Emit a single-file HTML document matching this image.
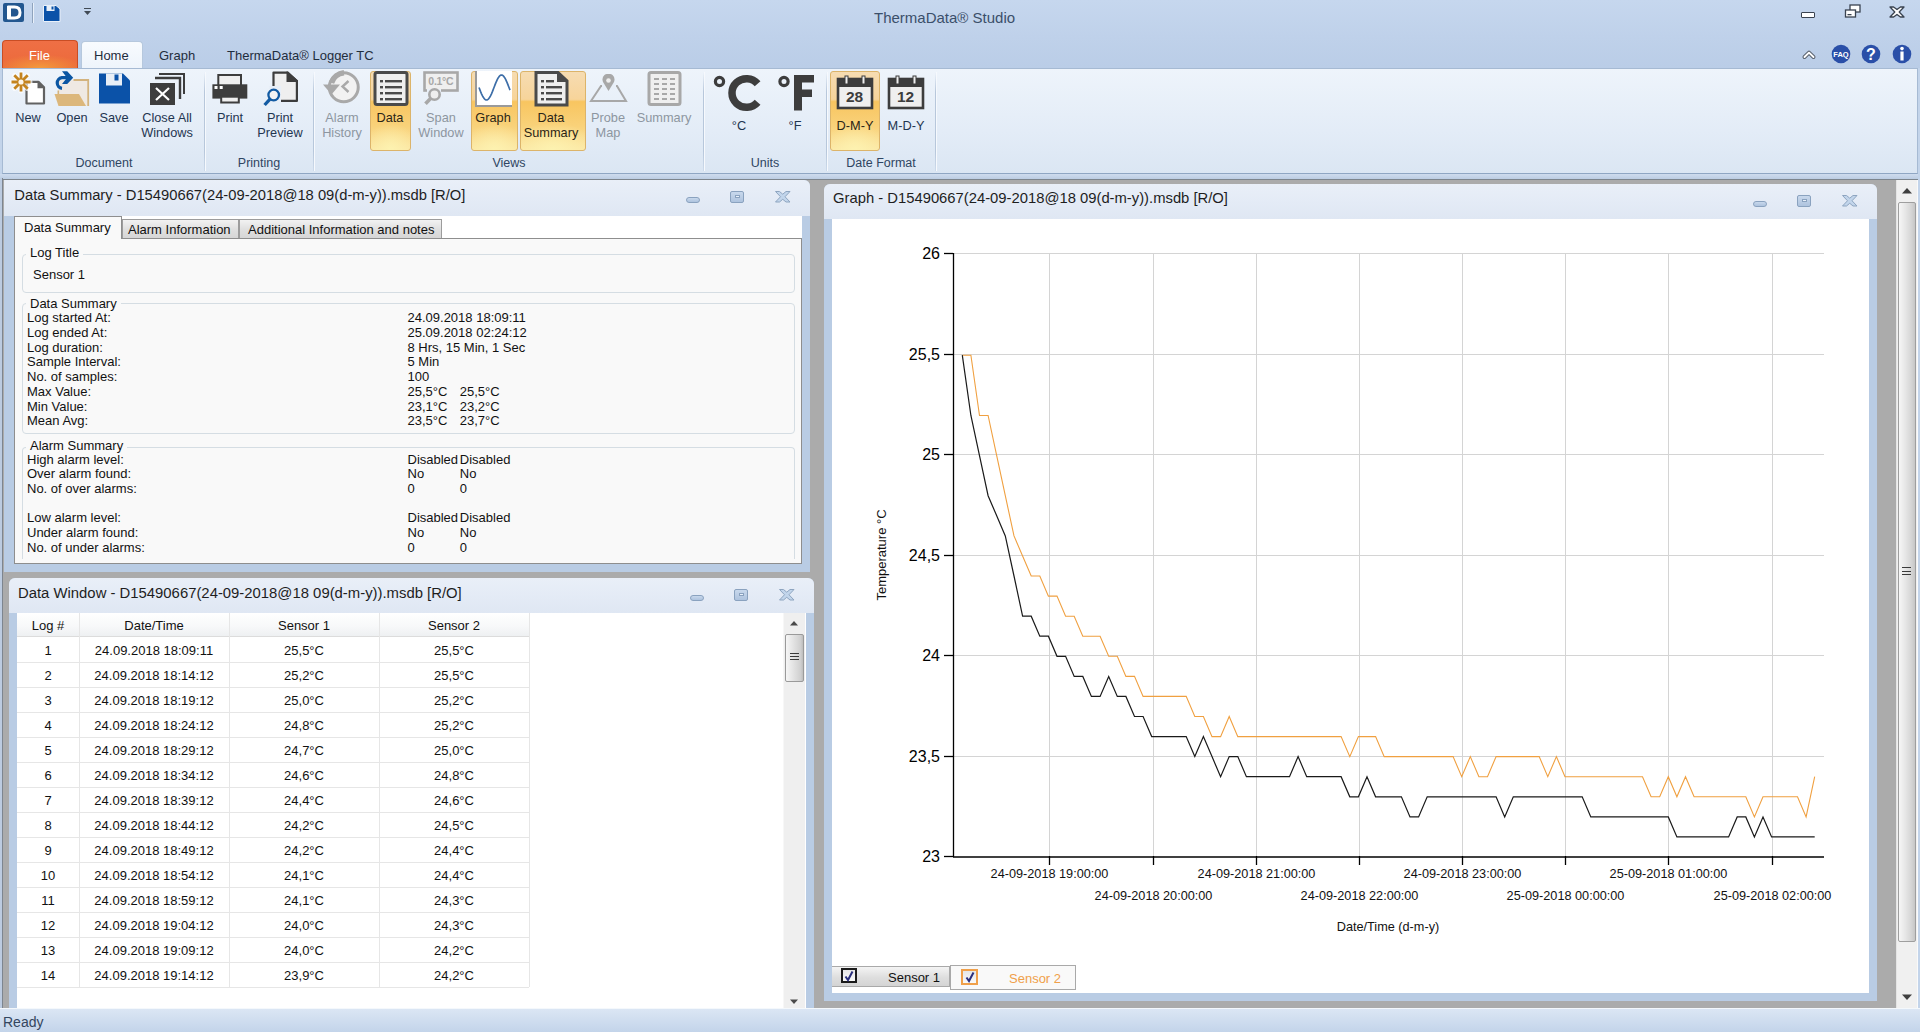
<!DOCTYPE html>
<html><head><meta charset="utf-8"><title>ThermaData Studio</title>
<style>
*{margin:0;padding:0;box-sizing:border-box}
html,body{width:1920px;height:1032px;overflow:hidden}
body{font-family:"Liberation Sans",sans-serif;color:#000;background:#c3d4ea}
#app{position:relative;width:1920px;height:1032px;overflow:hidden}
.a{position:absolute}
.t{position:absolute;white-space:nowrap;line-height:1}
/* title bar */
#titlebar{position:absolute;left:0;top:0;width:1920px;height:68px;
 background:linear-gradient(#c6d7ee 0%,#bfd1ea 55%,#bacde7 100%)}
/* ribbon */
#ribbon{position:absolute;left:2px;top:68px;width:1916px;height:106px;
 background:linear-gradient(#eef4fb 0%,#e3ecf7 60%,#dbe6f3 100%);
 border:1px solid #a6bad3;border-bottom-color:#8fa6c3}
#ribstrip{position:absolute;left:0;top:174px;width:1920px;height:5px;background:linear-gradient(#cfdcee,#bccde3)}
#mdi{position:absolute;left:0;top:178.5px;width:1920px;height:829.5px;background:#ababab;border-top:1.5px solid #7d858d}
#mdil{position:absolute;left:0;top:178px;width:2.5px;height:830px;background:#bccbe0;border-right:1.5px solid #7d858f}
#status{position:absolute;left:0;top:1008px;width:1920px;height:24px;
 background:linear-gradient(#dbe6f4,#c3d4ea);border-top:1px solid #f4f8fc}
/* mdi windows */
.win{position:absolute;background:#b9cce4;border-radius:6px 6px 0 0}
.win .cap{position:absolute;left:0;top:0;right:0;border-radius:6px 6px 0 0;
 background:linear-gradient(#e9eff8 0%,#e4ebf6 50%,#dfe7f3 100%)}
.win .cap .ttl{position:absolute;font-size:14.75px;color:#1e1e1e;white-space:nowrap;line-height:1}
.wbtn{position:absolute}
.hl{position:absolute;border:1px solid #dcb46a;border-radius:3px;
 background:radial-gradient(ellipse 70% 35% at 50% 100%,#fdf2b0 0%,rgba(253,238,170,0) 100%),
 linear-gradient(#f6dcb2 0%,#f7d49a 35%,#f8c560 38%,#f9d27a 70%,#fbe7a6 100%)}
.rl{position:absolute;font-size:12.75px;line-height:15px;color:#1f3550;text-align:center;white-space:nowrap;transform:translateX(-50%)}
.rl.dis{color:#8d96a0}
.gl{position:absolute;top:155.7px;font-size:12.5px;line-height:14px;color:#2f4562;white-space:nowrap;transform:translateX(-50%)}
.gb{position:absolute;border:1px solid #d5dde3;border-radius:4px}
.gbl{position:absolute;font-size:13px;line-height:1;color:#111;background:#f9f9f9;padding:0 4px;white-space:nowrap}
.sm{font-size:13px;color:#111}
.tc{font-size:13px;color:#111;transform:translateX(-50%)}
.yl{font-family:"Liberation Sans",sans-serif;font-size:16px;text-anchor:end;fill:#000}
.xl{font-family:"Liberation Sans",sans-serif;font-size:12.7px;text-anchor:middle;fill:#111}
.rl.hlt{color:#2b2516}

</style></head>
<body>
<div id="app">
<div id="titlebar">
 <!-- app logo -->
 <svg class="a" style="left:3px;top:3px" width="22" height="20" viewBox="0 0 22 20">
  <rect x="0" y="0" width="21" height="19" rx="2" fill="#23578f"/>
  <path d="M6 4 H11.5 Q17 4 17 9.5 Q17 15 11.5 15 H6 Z" fill="none" stroke="#fff" stroke-width="3"/>
  <rect x="4" y="3" width="4" height="13" fill="#fff"/>
 </svg>
 <div class="a" style="left:32px;top:3px;width:1px;height:20px;background:#8fa3bd;box-shadow:1px 0 0 #e8f0fa"></div>
 <!-- save -->
 <svg class="a" style="left:43px;top:5px" width="18" height="17" viewBox="0 0 18 17">
  <path d="M0.5 0.5 H13 L17 4 V16.5 H0.5 Z" fill="#0b52a8" stroke="#e9f0f9" stroke-width="1"/>
  <rect x="3.5" y="1" width="8" height="5" fill="#e9f0f9"/>
  <rect x="8.5" y="1.5" width="2" height="3" fill="#0b52a8"/>
 </svg>
 <!-- qat dropdown -->
 <svg class="a" style="left:83px;top:8px" width="9" height="8" viewBox="0 0 9 8">
  <rect x="1" y="0" width="7" height="1" fill="#404a55"/>
  <path d="M1 3 H8 L4.5 7 Z" fill="#404a55"/>
 </svg>
 <div class="t" style="left:874px;top:10px;font-size:15px;color:#3b4f6a;letter-spacing:0px">ThermaData® Studio</div>
 <!-- window controls -->
 <div class="a" style="left:1801px;top:12px;width:14px;height:6px;border:1.5px solid #3a4350;border-radius:1px;background:#fff"></div>
 <svg class="a" style="left:1844px;top:4px" width="18" height="15" viewBox="0 0 18 15">
  <rect x="6" y="1" width="10" height="7" fill="#fff" stroke="#3a4350" stroke-width="1.3"/>
  <rect x="1.5" y="6" width="10" height="7" fill="#fff" stroke="#3a4350" stroke-width="1.3"/>
  <rect x="3.5" y="10" width="4" height="1.3" fill="#3a4350"/>
 </svg>
 <svg class="a" style="left:1889px;top:6px" width="16" height="12" viewBox="0 0 16 12"><path d="M1 1 H4.6 L8 3.6 L11.4 1 H15 L10.2 6 L15 11 H11.4 L8 8.4 L4.6 11 H1 L5.8 6 Z" fill="#fff" stroke="#3a4350" stroke-width="1.3" stroke-linejoin="round"/></svg>
 <!-- tabs -->
 <div class="a" style="left:2px;top:40px;width:76px;height:28px;border-radius:4px 4px 0 0;border:1px solid #c94d24;border-bottom:none;
   background:radial-gradient(ellipse 60% 50% at 50% 100%,#f39a3c 0%,rgba(243,140,60,0) 100%),linear-gradient(#ef6f45,#ec6a3a)"></div>
 <div class="t" style="left:29px;top:48.5px;font-size:13px;color:#fff">File</div>
 <div class="a" style="left:81px;top:40.5px;width:61.5px;height:28.5px;border-radius:4px 4px 0 0;border:1px solid #b6c8dd;border-bottom:none;background:linear-gradient(#f8fbfe,#eef4fb)"></div>
 <div class="t" style="left:94px;top:48.5px;font-size:13px;color:#1f2d3d">Home</div>
 <div class="t" style="left:159px;top:48.5px;font-size:13px;color:#1f2d3d">Graph</div>
 <div class="t" style="left:227px;top:48.5px;font-size:13px;color:#1f2d3d">ThermaData® Logger TC</div>
 <!-- right icons -->
 <svg class="a" style="left:1801px;top:48px" width="16" height="12" viewBox="0 0 16 12"><path d="M3.5 9 L8 4.6 L12.5 9" fill="none" stroke="#5c6470" stroke-width="4" stroke-linejoin="round" stroke-linecap="round"/><path d="M3.5 9 L8 4.6 L12.5 9" fill="none" stroke="#fff" stroke-width="1.8" stroke-linejoin="round" stroke-linecap="round"/></svg>
 <svg class="a" style="left:1831px;top:44px" width="20" height="20" viewBox="0 0 20 20">
  <circle cx="10" cy="10" r="9.3" fill="#2a4fa8"/>
  <text x="10" y="12.8" font-family="Liberation Sans" font-size="7.5" font-weight="bold" fill="#fff" text-anchor="middle">FAQ</text>
 </svg>
 <svg class="a" style="left:1861px;top:44px" width="20" height="20" viewBox="0 0 20 20">
  <circle cx="10" cy="10" r="9.3" fill="#2a4fa8"/>
  <text x="10" y="16" font-family="Liberation Sans" font-size="16" font-weight="bold" fill="#fff" text-anchor="middle">?</text>
 </svg>
 <svg class="a" style="left:1892px;top:44px" width="20" height="20" viewBox="0 0 20 20">
  <circle cx="10" cy="10" r="9.3" fill="#2a4fa8"/>
  <rect x="8.4" y="7.5" width="3.2" height="9" fill="#fff"/>
  <circle cx="10" cy="4.6" r="1.8" fill="#fff"/>
 </svg>
</div>
<div id="ribstrip"></div>

<div id="ribbon">
 <!-- group separators -->
 <div class="a" style="left:201px;top:3px;width:1px;height:99px;background:linear-gradient(rgba(170,190,215,0),#b7c7db 20%,#b7c7db 80%,rgba(170,190,215,0.3));box-shadow:1px 0 0 #f6f9fd"></div>
 <div class="a" style="left:310px;top:3px;width:1px;height:99px;background:linear-gradient(rgba(170,190,215,0),#b7c7db 20%,#b7c7db 80%,rgba(170,190,215,0.3));box-shadow:1px 0 0 #f6f9fd"></div>
 <div class="a" style="left:700px;top:3px;width:1px;height:99px;background:linear-gradient(rgba(170,190,215,0),#b7c7db 20%,#b7c7db 80%,rgba(170,190,215,0.3));box-shadow:1px 0 0 #f6f9fd"></div>
 <div class="a" style="left:823px;top:3px;width:1px;height:99px;background:linear-gradient(rgba(170,190,215,0),#b7c7db 20%,#b7c7db 80%,rgba(170,190,215,0.3));box-shadow:1px 0 0 #f6f9fd"></div>
 <div class="a" style="left:932px;top:3px;width:1px;height:99px;background:linear-gradient(rgba(170,190,215,0),#b7c7db 20%,#b7c7db 80%,rgba(170,190,215,0.3));box-shadow:1px 0 0 #f6f9fd"></div>
 <!-- highlighted buttons -->
 <div class="hl" style="left:367px;top:2px;width:41px;height:80px"></div>
 <div class="hl" style="left:468px;top:2px;width:47px;height:80px"></div>
 <div class="hl" style="left:517px;top:2px;width:66px;height:80px"></div>
 <div class="hl" style="left:827px;top:2px;width:50px;height:80px"></div>
</div>
<div id="ribicons">
 <!-- New -->
 <svg class="a" style="left:9px;top:71px" width="40" height="36" viewBox="0 0 40 36">
  <path d="M17.5 10.8 H29.5 L35 16.3 V32.5 H17.5 Z" fill="#fff" stroke="#626262" stroke-width="2.2" stroke-linejoin="round"/>
  <path d="M28.5 9.8 V17.3 H36 Z" fill="#626262"/>
  <g stroke="#fff" stroke-width="5" stroke-linecap="round" opacity="0.7">
   <path d="M12 2 V20 M3 11 H21 M5.6 4.6 L18.4 17.4 M18.4 4.6 L5.6 17.4"/>
  </g>
  <g stroke="#c4841f" stroke-width="2.8" stroke-linecap="butt">
   <path d="M12 1.5 V20.5 M2.5 11 H21.5 M5.3 4.3 L18.7 17.7 M18.7 4.3 L5.3 17.7"/>
  </g>
  <circle cx="12" cy="11" r="2.6" fill="#fdf6ea"/>
 </svg>
 <!-- Open -->
 <svg class="a" style="left:52px;top:70px" width="40" height="38" viewBox="0 0 40 38">
  <rect x="6" y="10" width="31" height="26" fill="#efe9e3"/>
  <path d="M21.5 10 H36.2 V36" fill="none" stroke="#d3b37e" stroke-width="1.8"/>
  <rect x="5.5" y="20.5" width="1.6" height="4" fill="#d3b37e"/>
  <path d="M2.5 24 H27 L34 36 H6.5 Z" fill="#dcb77b"/>
  <path d="M10 18.3 A5.4 5.4 0 0 1 9.8 7.6 H16" fill="none" stroke="#0b56a3" stroke-width="3.2"/>
  <path d="M10 1.3 H15.2 L21.2 7.7 L15.2 13.9 H10 L15 7.7 Z" fill="#0b56a3"/>
 </svg>
 <!-- Save -->
 <svg class="a" style="left:99px;top:73px" width="32" height="32" viewBox="0 0 32 32">
  <path d="M0 0.5 H24 L31 7.5 V30.5 H0 Z" fill="#0b52a8"/>
  <rect x="7" y="0.5" width="16" height="12" fill="#e8eef6"/>
  <rect x="15.5" y="1.5" width="4" height="6" fill="#0b52a8"/>
 </svg>
 <!-- Close all windows -->
 <svg class="a" style="left:149px;top:72px" width="36" height="35" viewBox="0 0 36 35">
  <path d="M10 2 H35 V22" fill="none" stroke="#3d3d3d" stroke-width="2"/>
  <path d="M6 6 H31 V27" fill="none" stroke="#3d3d3d" stroke-width="2.4"/>
  <rect x="1" y="11" width="25" height="22" fill="#3d3d3d"/>
  <path d="M7 16 L20 28 M20 16 L7 28" stroke="#fff" stroke-width="2.2"/>
 </svg>
 <!-- Print -->
 <svg class="a" style="left:211px;top:73px" width="38" height="33" viewBox="0 0 38 33">
  <rect x="7.3" y="2" width="22.7" height="11" fill="#efefef" stroke="#3d3d3d" stroke-width="2"/>
  <rect x="1.4" y="11.3" width="34.9" height="14.3" fill="#3d3d3d"/>
  <rect x="3.5" y="13" width="3" height="3" fill="#fff"/><rect x="8.7" y="13" width="3" height="3" fill="#fff"/>
  <rect x="10.2" y="23.7" width="17.6" height="5.8" fill="#efefef" stroke="#3d3d3d" stroke-width="2"/>
 </svg>
 <!-- Print preview -->
 <svg class="a" style="left:261px;top:70px" width="40" height="38" viewBox="0 0 40 38">
  <path d="M12.5 2.6 H26.5 L35.9 11 V30.9 H12.5 Z" fill="#efefef" stroke="#3d3d3d" stroke-width="2.2" stroke-linejoin="round"/>
  <path d="M25.5 1.5 H27 L37 10.5 V12 H25.5 Z" fill="#3d3d3d"/>
  <rect x="8" y="16" width="12" height="18" fill="#e8eff8"/>
  <circle cx="12.7" cy="25" r="5.3" fill="#f4f4f4" stroke="#135ba3" stroke-width="2.3"/>
  <path d="M9.2 28.8 L3.6 35" stroke="#135ba3" stroke-width="3.3"/>
 </svg>
 <!-- Alarm history -->
 <svg class="a" style="left:322px;top:70px" width="40" height="38" viewBox="0 0 40 38">
  <circle cx="21.75" cy="17.25" r="14.5" fill="#f2f2f2" stroke="#a9a9a9" stroke-width="3"/>
  <path d="M22 2.8 A14.5 14.5 0 0 0 9.5 13" fill="none" stroke="#a9a9a9" stroke-width="5.5"/>
  <path d="M1 14.5 L18 14.5 L9.5 24.5 Z" fill="#a9a9a9"/>
  <path d="M26.5 11 L20.5 16.5 L26.5 22" fill="none" stroke="#a9a9a9" stroke-width="2.4"/>
 </svg>
 <!-- Data -->
 <svg class="a" style="left:373px;top:71px" width="36" height="36" viewBox="0 0 36 36">
  <rect x="2" y="1.5" width="32" height="32" rx="2" fill="#efefef" stroke="#4a4a4a" stroke-width="3"/>
  <g fill="#4a4a4a"><rect x="7" y="9" width="3" height="2.4"/><rect x="12" y="9" width="17" height="2.4"/>
  <rect x="7" y="15" width="3" height="2.4"/><rect x="12" y="15" width="17" height="2.4"/>
  <rect x="7" y="21" width="3" height="2.4"/><rect x="12" y="21" width="17" height="2.4"/>
  <rect x="7" y="27" width="3" height="2.4"/><rect x="12" y="27" width="17" height="2.4"/></g>
 </svg>
 <!-- Span window -->
 <svg class="a" style="left:422px;top:70px" width="38" height="38" viewBox="0 0 38 38">
  <rect x="2.5" y="2.5" width="33" height="18" fill="#efefef" stroke="#a8a8a8" stroke-width="2.6"/>
  <text x="18.8" y="15" font-family="Liberation Sans" font-size="10.5" font-weight="bold" fill="#a8a8a8" text-anchor="middle" letter-spacing="-0.3">0.1°C</text>
  <rect x="5" y="19" width="14" height="5" fill="#e9f0f9"/>
  <circle cx="12.5" cy="24.5" r="5.2" fill="#efefef" stroke="#a8a8a8" stroke-width="2.6"/>
  <path d="M8.8 28.3 L3.5 33.8" stroke="#a8a8a8" stroke-width="3.6"/>
 </svg>
 <!-- Graph -->
 <svg class="a" style="left:474px;top:71px" width="40" height="37" viewBox="0 0 40 37">
  <rect x="1" y="0" width="37" height="36" fill="#fff"/>
  <path d="M2 0 V35 H38" fill="none" stroke="#9a9a9a" stroke-width="2"/>
  <path d="M5.0 16.5 L5.5 17.8 L6.0 19.1 L6.5 20.4 L7.0 21.6 L7.5 22.8 L8.0 23.8 L8.5 24.9 L9.0 25.8 L9.5 26.6 L10.0 27.3 L10.5 27.9 L11.0 28.4 L11.5 28.7 L12.0 28.9 L12.5 29.0 L13.0 28.9 L13.5 28.7 L14.0 28.4 L14.5 27.9 L15.0 27.3 L15.5 26.6 L16.0 25.8 L16.5 24.9 L17.0 23.8 L17.5 22.8 L18.0 21.6 L18.5 20.4 L19.0 19.1 L19.5 17.8 L20.0 16.5 L20.5 15.2 L21.0 13.9 L21.5 12.6 L22.0 11.4 L22.5 10.3 L23.0 9.2 L23.5 8.1 L24.0 7.2 L24.5 6.4 L25.0 5.7 L25.5 5.1 L26.0 4.6 L26.5 4.3 L27.0 4.1 L27.5 4.0 L28.0 4.1 L28.5 4.3 L29.0 4.6 L29.5 5.1 L30.0 5.7 L30.5 6.4 L31.0 7.2 L31.5 8.1 L32.0 9.2 L32.5 10.3 L33.0 11.4 L33.5 12.6 L34.0 13.9 L34.5 15.2 L35.0 16.5 L35.5 17.8 L36.0 19.1" fill="none" stroke="#3d6ea8" stroke-width="1.7"/>
 </svg>
 <!-- Data summary -->
 <svg class="a" style="left:534px;top:71px" width="36" height="36" viewBox="0 0 36 36">
  <path d="M2 1.5 H24 L33 10 V34 H2 Z" fill="#efefef" stroke="#4a4a4a" stroke-width="3"/>
  <path d="M23 1.5 V11 H33 Z" fill="#4a4a4a"/>
  <g fill="#4a4a4a"><rect x="7" y="9" width="3" height="2.4"/><rect x="12" y="9" width="8" height="2.4"/>
  <rect x="7" y="15" width="3" height="2.4"/><rect x="12" y="15" width="16" height="2.4"/>
  <rect x="7" y="21" width="3" height="2.4"/><rect x="12" y="21" width="16" height="2.4"/>
  <rect x="7" y="27" width="3" height="2.4"/><rect x="12" y="27" width="16" height="2.4"/></g>
 </svg>
 <!-- Probe map -->
 <svg class="a" style="left:589px;top:74px" width="40" height="30" viewBox="0 0 40 30">
  <path d="M2 27 L12 12 H28 L37 27 Z" fill="none" stroke="#a8a8a8" stroke-width="2"/>
  <rect x="13" y="9" width="14" height="6" fill="#e9f0f9"/>
  <path d="M19.5 17 L14 8 A6 6 0 1 1 25 8 Z" fill="#a8a8a8"/>
  <circle cx="19.5" cy="6.5" r="2.3" fill="#efefef"/>
 </svg>
 <!-- Summary -->
 <svg class="a" style="left:647px;top:71px" width="36" height="36" viewBox="0 0 36 36">
  <rect x="2" y="1.5" width="31" height="32" rx="2" fill="#efefef" stroke="#a8a8a8" stroke-width="3"/>
  <g fill="#a8a8a8">
   <rect x="7" y="7" width="5" height="2"/><rect x="15" y="7" width="5" height="2"/><rect x="23" y="7" width="5" height="2"/>
   <rect x="7" y="12" width="5" height="2"/><rect x="15" y="12" width="5" height="2"/><rect x="23" y="12" width="5" height="2"/>
   <rect x="7" y="17" width="5" height="2"/><rect x="15" y="17" width="5" height="2"/><rect x="23" y="17" width="5" height="2"/>
   <rect x="7" y="22" width="5" height="2"/><rect x="15" y="22" width="5" height="2"/><rect x="23" y="22" width="5" height="2"/>
   <rect x="7" y="27" width="5" height="2"/><rect x="15" y="27" width="5" height="2"/><rect x="23" y="27" width="5" height="2"/>
  </g>
 </svg>
 <!-- deg C -->
 <svg class="a" style="left:712px;top:73px" width="52" height="40" viewBox="0 0 52 40">
  <circle cx="7.5" cy="8.5" r="4.1" fill="none" stroke="#3d3d3d" stroke-width="3.2"/>
  <path d="M45.6 10.8 A14.5 14.3 0 1 0 45.6 29.2" fill="none" stroke="#3d3d3d" stroke-width="7.5"/>
 </svg>
 <!-- deg F -->
 <svg class="a" style="left:776px;top:73px" width="42" height="40" viewBox="0 0 42 40">
  <circle cx="8" cy="8.5" r="4.1" fill="none" stroke="#3d3d3d" stroke-width="3.2"/>
  <path d="M18 2 H38 V9.5 H26 V16.5 H36 V24 H26 V37.5 H18 Z" fill="#3d3d3d"/>
 </svg>
 <!-- cal 28 -->
 <svg class="a" style="left:836px;top:75px" width="38" height="35" viewBox="0 0 38 35">
  <rect x="2" y="4" width="34" height="29" fill="#efefef" stroke="#3d3d3d" stroke-width="2.6"/>
  <rect x="2" y="4" width="34" height="8" fill="#3d3d3d"/>
  <rect x="9" y="1" width="3" height="8" fill="#efefef" stroke="#3d3d3d" stroke-width="1"/>
  <rect x="26" y="1" width="3" height="8" fill="#efefef" stroke="#3d3d3d" stroke-width="1"/>
  <text x="18.5" y="27" font-family="Liberation Sans" font-size="15.5" font-weight="bold" fill="#3d3d3d" text-anchor="middle">28</text>
 </svg>
 <!-- cal 12 -->
 <svg class="a" style="left:887px;top:75px" width="38" height="35" viewBox="0 0 38 35">
  <rect x="2" y="4" width="34" height="29" fill="#efefef" stroke="#3d3d3d" stroke-width="2.6"/>
  <rect x="2" y="4" width="34" height="8" fill="#3d3d3d"/>
  <rect x="9" y="1" width="3" height="8" fill="#efefef" stroke="#3d3d3d" stroke-width="1"/>
  <rect x="26" y="1" width="3" height="8" fill="#efefef" stroke="#3d3d3d" stroke-width="1"/>
  <text x="18.5" y="27" font-family="Liberation Sans" font-size="15.5" font-weight="bold" fill="#3d3d3d" text-anchor="middle">12</text>
 </svg>
 <!-- labels -->
 <div class="rl" style="left:28px;top:109.8px">New</div>
 <div class="rl" style="left:72px;top:109.8px">Open</div>
 <div class="rl" style="left:114px;top:109.8px">Save</div>
 <div class="rl" style="left:167px;top:109.8px">Close All<br>Windows</div>
 <div class="rl" style="left:230px;top:109.8px">Print</div>
 <div class="rl" style="left:280px;top:109.8px">Print<br>Preview</div>
 <div class="rl dis" style="left:342px;top:109.8px">Alarm<br>History</div>
 <div class="rl hlt" style="left:390px;top:109.8px">Data</div>
 <div class="rl dis" style="left:441px;top:109.8px">Span<br>Window</div>
 <div class="rl hlt" style="left:493px;top:109.8px">Graph</div>
 <div class="rl hlt" style="left:551px;top:109.8px">Data<br>Summary</div>
 <div class="rl dis" style="left:608px;top:109.8px">Probe<br>Map</div>
 <div class="rl dis" style="left:664px;top:109.8px">Summary</div>
 <div class="rl" style="left:739px;top:117.5px">°C</div>
 <div class="rl" style="left:795px;top:117.5px">°F</div>
 <div class="rl hlt" style="left:855px;top:117.5px">D-M-Y</div>
 <div class="rl" style="left:906px;top:117.5px">M-D-Y</div>
 <div class="gl" style="left:104px">Document</div>
 <div class="gl" style="left:259px">Printing</div>
 <div class="gl" style="left:509px">Views</div>
 <div class="gl" style="left:765px">Units</div>
 <div class="gl" style="left:881px">Date Format</div>
</div>

<div id="mdi">
<div class="win" style="left:4px;top:0px;width:806px;height:392px;border-top-left-radius:0">
 <div class="cap" style="height:36px;border-top-left-radius:0"><div class="ttl" style="left:10.3px;top:8.5px">Data Summary - D15490667(24-09-2018@18 09(d-m-y)).msdb [R/O]</div></div>
 <div class="a" style="left:682px;top:17px;width:14px;height:6px;border:1px solid #8aa2bf;border-radius:3px;background:linear-gradient(#c8d8ec,#aec3de)"></div><div class="a" style="left:726px;top:11px;width:14px;height:12px;border:1px solid #8aa2bf;border-radius:2px;background:linear-gradient(#c8d8ec,#aec3de)"><div class="a" style="left:4px;top:3px;width:5px;height:3px;border:1px solid #8aa2bf;background:#e8f0fa"></div></div><svg class="a" style="left:771px;top:11px" width="16" height="12" viewBox="0 0 16 12"><path d="M0.5 0.5 H4.5 L7.75 3.2 L11 0.5 H15 L10 5.75 L15 11 H11 L7.75 8.3 L4.5 11 H0.5 L5.5 5.75 Z" fill="#c2d5eb" stroke="#8ea5c0" stroke-width="1"/></svg>
 <div class="a" style="left:9.5px;top:36px;width:788px;height:348px;background:#fff"></div>
 <!-- tabs -->
 <div class="a" style="left:118px;top:39.5px;width:117px;height:19px;border:1px solid #9c9c9c;border-bottom:none;background:linear-gradient(#f2f2f2,#e0e0e0 50%,#d6d6d6)"></div>
 <div class="t" style="left:124px;top:43px;font-size:13px;color:#111">Alarm Information</div>
 <div class="a" style="left:235px;top:39.5px;width:203px;height:19px;border:1px solid #9c9c9c;border-bottom:none;background:linear-gradient(#f2f2f2,#e0e0e0 50%,#d6d6d6)"></div>
 <div class="t" style="left:244px;top:43px;font-size:13px;color:#111">Additional Information and notes</div>
 <!-- content panel -->
 <div class="a" style="left:9.5px;top:58px;width:788px;height:326px;background:#f9f9f9;border:1px solid #8e8e8e"></div>
 <div class="a" style="left:9.5px;top:36px;width:108px;height:23px;border:1px solid #8e8e8e;border-bottom:none;background:#f9f9f9"></div>
 <div class="t" style="left:20px;top:41px;font-size:13px;color:#111">Data Summary</div>
 <!-- group boxes -->
 <div class="gb" style="left:17.5px;top:74px;width:773px;height:39px"></div>
 <div class="gbl" style="left:22px;top:66.5px">Log Title</div>
 <div class="t sm" style="left:29px;top:88px">Sensor 1</div>
 <div class="gb" style="left:17.5px;top:123.5px;width:773px;height:131px"></div>
 <div class="gbl" style="left:22px;top:117px">Data Summary</div>
 <div class="a sm" style="left:23px;top:131.8px;line-height:14.7px;white-space:nowrap">Log started At:<br>Log ended At:<br>Log duration:<br>Sample Interval:<br>No. of samples:<br>Max Value:<br>Min Value:<br>Mean Avg:</div>
 <div class="a sm" style="left:403.5px;top:131.8px;line-height:14.7px;white-space:nowrap">24.09.2018 18:09:11<br>25.09.2018 02:24:12<br>8 Hrs, 15 Min, 1 Sec<br>5 Min<br>100<br>25,5°C<br>23,1°C<br>23,5°C</div>
 <div class="a sm" style="left:455.8px;top:131.8px;line-height:14.7px;white-space:nowrap"><br><br><br><br><br>25,5°C<br>23,2°C<br>23,7°C</div>
 <div class="gb" style="left:17.5px;top:267px;width:773px;height:112px;border-bottom:none;border-radius:4px 4px 0 0"></div>
 <div class="gbl" style="left:22px;top:259.3px">Alarm Summary</div>
 <div class="a sm" style="left:23px;top:273px;line-height:14.7px;white-space:nowrap">High alarm level:<br>Over alarm found:<br>No. of over alarms:<br><br>Low alarm level:<br>Under alarm found:<br>No. of under alarms:</div>
 <div class="a sm" style="left:403.5px;top:273px;line-height:14.7px;white-space:nowrap">Disabled<br>No<br>0<br><br>Disabled<br>No<br>0</div>
 <div class="a sm" style="left:455.8px;top:273px;line-height:14.7px;white-space:nowrap">Disabled<br>No<br>0<br><br>Disabled<br>No<br>0</div>
 <div class="a" style="left:9.5px;top:384px;width:788px;height:8px;background:#b9cce4"></div>
</div>

<div class="win" style="left:9px;top:398px;width:805px;height:440px">
 <div class="cap" style="height:35px"><div class="ttl" style="left:9px;top:8.0px;font-size:14.87px">Data Window - D15490667(24-09-2018@18 09(d-m-y)).msdb [R/O]</div></div>
 <div class="a" style="left:681px;top:17px;width:14px;height:6px;border:1px solid #8aa2bf;border-radius:3px;background:linear-gradient(#c8d8ec,#aec3de)"></div><div class="a" style="left:725px;top:11px;width:14px;height:12px;border:1px solid #8aa2bf;border-radius:2px;background:linear-gradient(#c8d8ec,#aec3de)"><div class="a" style="left:4px;top:3px;width:5px;height:3px;border:1px solid #8aa2bf;background:#e8f0fa"></div></div><svg class="a" style="left:770px;top:11px" width="16" height="12" viewBox="0 0 16 12"><path d="M0.5 0.5 H4.5 L7.75 3.2 L11 0.5 H15 L10 5.75 L15 11 H11 L7.75 8.3 L4.5 11 H0.5 L5.5 5.75 Z" fill="#c2d5eb" stroke="#8ea5c0" stroke-width="1"/></svg>
 <div class="a" style="left:8px;top:35px;width:789px;height:405px;background:#fff"></div>
 <div class="a" style="left:8px;top:35px;width:512px;height:24.5px;background:linear-gradient(#ffffff,#f7f8f9 60%,#eef0f2);border-bottom:1px solid #dcdcdc"></div>
 <div class="a" style="left:70px;top:35px;width:1px;height:374px;background:#e6e6e6"></div>
 <div class="a" style="left:220px;top:35px;width:1px;height:374px;background:#e6e6e6"></div>
 <div class="a" style="left:370px;top:35px;width:1px;height:374px;background:#e6e6e6"></div>
 <div class="a" style="left:520px;top:35px;width:1px;height:374px;background:#e6e6e6"></div>
 <div class="t tc" style="left:39px;top:41.2px">Log #</div>
 <div class="t tc" style="left:145px;top:41.2px">Date/Time</div>
 <div class="t tc" style="left:295px;top:41.2px">Sensor 1</div>
 <div class="t tc" style="left:445px;top:41.2px">Sensor 2</div>
 <div class="a" style="left:8px;top:84.4px;width:512px;height:1px;background:#e6e6e6"></div>
 <div class="t tc" style="left:39px;top:66.3px">1</div>
 <div class="t tc" style="left:145px;top:66.3px">24.09.2018 18:09:11</div>
 <div class="t tc" style="left:295px;top:66.3px">25,5°C</div>
 <div class="t tc" style="left:445px;top:66.3px">25,5°C</div>
 <div class="a" style="left:8px;top:109.4px;width:512px;height:1px;background:#e6e6e6"></div>
 <div class="t tc" style="left:39px;top:91.3px">2</div>
 <div class="t tc" style="left:145px;top:91.3px">24.09.2018 18:14:12</div>
 <div class="t tc" style="left:295px;top:91.3px">25,2°C</div>
 <div class="t tc" style="left:445px;top:91.3px">25,5°C</div>
 <div class="a" style="left:8px;top:134.4px;width:512px;height:1px;background:#e6e6e6"></div>
 <div class="t tc" style="left:39px;top:116.3px">3</div>
 <div class="t tc" style="left:145px;top:116.3px">24.09.2018 18:19:12</div>
 <div class="t tc" style="left:295px;top:116.3px">25,0°C</div>
 <div class="t tc" style="left:445px;top:116.3px">25,2°C</div>
 <div class="a" style="left:8px;top:159.4px;width:512px;height:1px;background:#e6e6e6"></div>
 <div class="t tc" style="left:39px;top:141.3px">4</div>
 <div class="t tc" style="left:145px;top:141.3px">24.09.2018 18:24:12</div>
 <div class="t tc" style="left:295px;top:141.3px">24,8°C</div>
 <div class="t tc" style="left:445px;top:141.3px">25,2°C</div>
 <div class="a" style="left:8px;top:184.4px;width:512px;height:1px;background:#e6e6e6"></div>
 <div class="t tc" style="left:39px;top:166.3px">5</div>
 <div class="t tc" style="left:145px;top:166.3px">24.09.2018 18:29:12</div>
 <div class="t tc" style="left:295px;top:166.3px">24,7°C</div>
 <div class="t tc" style="left:445px;top:166.3px">25,0°C</div>
 <div class="a" style="left:8px;top:209.4px;width:512px;height:1px;background:#e6e6e6"></div>
 <div class="t tc" style="left:39px;top:191.3px">6</div>
 <div class="t tc" style="left:145px;top:191.3px">24.09.2018 18:34:12</div>
 <div class="t tc" style="left:295px;top:191.3px">24,6°C</div>
 <div class="t tc" style="left:445px;top:191.3px">24,8°C</div>
 <div class="a" style="left:8px;top:234.4px;width:512px;height:1px;background:#e6e6e6"></div>
 <div class="t tc" style="left:39px;top:216.3px">7</div>
 <div class="t tc" style="left:145px;top:216.3px">24.09.2018 18:39:12</div>
 <div class="t tc" style="left:295px;top:216.3px">24,4°C</div>
 <div class="t tc" style="left:445px;top:216.3px">24,6°C</div>
 <div class="a" style="left:8px;top:259.4px;width:512px;height:1px;background:#e6e6e6"></div>
 <div class="t tc" style="left:39px;top:241.3px">8</div>
 <div class="t tc" style="left:145px;top:241.3px">24.09.2018 18:44:12</div>
 <div class="t tc" style="left:295px;top:241.3px">24,2°C</div>
 <div class="t tc" style="left:445px;top:241.3px">24,5°C</div>
 <div class="a" style="left:8px;top:284.4px;width:512px;height:1px;background:#e6e6e6"></div>
 <div class="t tc" style="left:39px;top:266.3px">9</div>
 <div class="t tc" style="left:145px;top:266.3px">24.09.2018 18:49:12</div>
 <div class="t tc" style="left:295px;top:266.3px">24,2°C</div>
 <div class="t tc" style="left:445px;top:266.3px">24,4°C</div>
 <div class="a" style="left:8px;top:309.4px;width:512px;height:1px;background:#e6e6e6"></div>
 <div class="t tc" style="left:39px;top:291.3px">10</div>
 <div class="t tc" style="left:145px;top:291.3px">24.09.2018 18:54:12</div>
 <div class="t tc" style="left:295px;top:291.3px">24,1°C</div>
 <div class="t tc" style="left:445px;top:291.3px">24,4°C</div>
 <div class="a" style="left:8px;top:334.4px;width:512px;height:1px;background:#e6e6e6"></div>
 <div class="t tc" style="left:39px;top:316.3px">11</div>
 <div class="t tc" style="left:145px;top:316.3px">24.09.2018 18:59:12</div>
 <div class="t tc" style="left:295px;top:316.3px">24,1°C</div>
 <div class="t tc" style="left:445px;top:316.3px">24,3°C</div>
 <div class="a" style="left:8px;top:359.4px;width:512px;height:1px;background:#e6e6e6"></div>
 <div class="t tc" style="left:39px;top:341.3px">12</div>
 <div class="t tc" style="left:145px;top:341.3px">24.09.2018 19:04:12</div>
 <div class="t tc" style="left:295px;top:341.3px">24,0°C</div>
 <div class="t tc" style="left:445px;top:341.3px">24,3°C</div>
 <div class="a" style="left:8px;top:384.4px;width:512px;height:1px;background:#e6e6e6"></div>
 <div class="t tc" style="left:39px;top:366.3px">13</div>
 <div class="t tc" style="left:145px;top:366.3px">24.09.2018 19:09:12</div>
 <div class="t tc" style="left:295px;top:366.3px">24,0°C</div>
 <div class="t tc" style="left:445px;top:366.3px">24,2°C</div>
 <div class="a" style="left:8px;top:409.4px;width:512px;height:1px;background:#e6e6e6"></div>
 <div class="t tc" style="left:39px;top:391.3px">14</div>
 <div class="t tc" style="left:145px;top:391.3px">24.09.2018 19:14:12</div>
 <div class="t tc" style="left:295px;top:391.3px">23,9°C</div>
 <div class="t tc" style="left:445px;top:391.3px">24,2°C</div>
 <div class="a" style="left:774px;top:35px;width:22px;height:405px;background:#efefef;border-left:1px solid #f7f7f7"></div>
 <svg class="a" style="left:780px;top:41px" width="10" height="8" viewBox="0 0 10 8"><path d="M1 6.5 L5 2 L9 6.5 Z" fill="#4a4a4a"/></svg>
 <div class="a" style="left:775.5px;top:56px;width:19px;height:48px;border:1px solid #9a9a9a;border-radius:2px;background:linear-gradient(90deg,#f6f6f6,#e2e2e2 45%,#d0d0d0 85%,#bdbdbd)"></div>
 <div class="a" style="left:780.5px;top:75px;width:9px;height:7px;border-top:1.5px solid #3a3a3a;border-bottom:1.5px solid #3a3a3a"></div>
 <div class="a" style="left:780.5px;top:78px;width:9px;height:1.5px;background:#3a3a3a"></div>
 <svg class="a" style="left:780px;top:420px" width="10" height="8" viewBox="0 0 10 8"><path d="M1 1.5 L5 6 L9 1.5 Z" fill="#4a4a4a"/></svg>
 <div class="a" style="left:797px;top:35px;width:8px;height:405px;background:#b9cce4"></div>
</div>
<div class="win" style="left:824px;top:4px;width:1053px;height:817px">
 <div class="cap" style="height:35px"><div class="ttl" style="left:9px;top:7.9px;font-size:14.8px">Graph - D15490667(24-09-2018@18 09(d-m-y)).msdb [R/O]</div></div>
 <div class="a" style="left:929px;top:17px;width:14px;height:6px;border:1px solid #8aa2bf;border-radius:3px;background:linear-gradient(#c8d8ec,#aec3de)"></div><div class="a" style="left:973px;top:11px;width:14px;height:12px;border:1px solid #8aa2bf;border-radius:2px;background:linear-gradient(#c8d8ec,#aec3de)"><div class="a" style="left:4px;top:3px;width:5px;height:3px;border:1px solid #8aa2bf;background:#e8f0fa"></div></div><svg class="a" style="left:1018px;top:11px" width="16" height="12" viewBox="0 0 16 12"><path d="M0.5 0.5 H4.5 L7.75 3.2 L11 0.5 H15 L10 5.75 L15 11 H11 L7.75 8.3 L4.5 11 H0.5 L5.5 5.75 Z" fill="#c2d5eb" stroke="#8ea5c0" stroke-width="1"/></svg>
 <div class="a" style="left:8px;top:35px;width:1037px;height:774px;background:#fff"></div>
</div>
<svg class="a" style="left:832px;top:38px" width="1037" height="775" viewBox="832 218 1037 775">
<line x1="953" y1="253.5" x2="1824" y2="253.5" stroke="#d4d4d4" stroke-width="1"/>
<line x1="953" y1="354.5" x2="1824" y2="354.5" stroke="#d4d4d4" stroke-width="1"/>
<line x1="953" y1="454.5" x2="1824" y2="454.5" stroke="#d4d4d4" stroke-width="1"/>
<line x1="953" y1="555.5" x2="1824" y2="555.5" stroke="#d4d4d4" stroke-width="1"/>
<line x1="953" y1="655.5" x2="1824" y2="655.5" stroke="#d4d4d4" stroke-width="1"/>
<line x1="953" y1="756.5" x2="1824" y2="756.5" stroke="#d4d4d4" stroke-width="1"/>
<line x1="1049.5" y1="253" x2="1049.5" y2="856" stroke="#d4d4d4" stroke-width="1"/>
<line x1="1153.5" y1="253" x2="1153.5" y2="856" stroke="#d4d4d4" stroke-width="1"/>
<line x1="1256.5" y1="253" x2="1256.5" y2="856" stroke="#d4d4d4" stroke-width="1"/>
<line x1="1359.5" y1="253" x2="1359.5" y2="856" stroke="#d4d4d4" stroke-width="1"/>
<line x1="1462.5" y1="253" x2="1462.5" y2="856" stroke="#d4d4d4" stroke-width="1"/>
<line x1="1565.5" y1="253" x2="1565.5" y2="856" stroke="#d4d4d4" stroke-width="1"/>
<line x1="1668.5" y1="253" x2="1668.5" y2="856" stroke="#d4d4d4" stroke-width="1"/>
<line x1="1772.5" y1="253" x2="1772.5" y2="856" stroke="#d4d4d4" stroke-width="1"/>
<line x1="953.5" y1="253" x2="953.5" y2="857" stroke="#000" stroke-width="1.3"/>
<line x1="953" y1="857" x2="1824" y2="857" stroke="#000" stroke-width="1.3"/>
<line x1="944" y1="253.5" x2="953" y2="253.5" stroke="#000" stroke-width="1.3"/>
<text x="940" y="258.5" class="yl">26</text>
<line x1="944" y1="354.5" x2="953" y2="354.5" stroke="#000" stroke-width="1.3"/>
<text x="940" y="359.5" class="yl">25,5</text>
<line x1="944" y1="454.5" x2="953" y2="454.5" stroke="#000" stroke-width="1.3"/>
<text x="940" y="459.5" class="yl">25</text>
<line x1="944" y1="555.5" x2="953" y2="555.5" stroke="#000" stroke-width="1.3"/>
<text x="940" y="560.5" class="yl">24,5</text>
<line x1="944" y1="655.5" x2="953" y2="655.5" stroke="#000" stroke-width="1.3"/>
<text x="940" y="660.5" class="yl">24</text>
<line x1="944" y1="756.5" x2="953" y2="756.5" stroke="#000" stroke-width="1.3"/>
<text x="940" y="761.5" class="yl">23,5</text>
<line x1="944" y1="856.5" x2="953" y2="856.5" stroke="#000" stroke-width="1.3"/>
<text x="940" y="861.5" class="yl">23</text>
<line x1="1049.5" y1="856" x2="1049.5" y2="865" stroke="#000" stroke-width="1.3"/>
<text x="1049.5" y="878.0" class="xl">24-09-2018 19:00:00</text>
<line x1="1153.5" y1="856" x2="1153.5" y2="865" stroke="#000" stroke-width="1.3"/>
<text x="1153.5" y="900.3" class="xl">24-09-2018 20:00:00</text>
<line x1="1256.5" y1="856" x2="1256.5" y2="865" stroke="#000" stroke-width="1.3"/>
<text x="1256.5" y="878.0" class="xl">24-09-2018 21:00:00</text>
<line x1="1359.5" y1="856" x2="1359.5" y2="865" stroke="#000" stroke-width="1.3"/>
<text x="1359.5" y="900.3" class="xl">24-09-2018 22:00:00</text>
<line x1="1462.5" y1="856" x2="1462.5" y2="865" stroke="#000" stroke-width="1.3"/>
<text x="1462.5" y="878.0" class="xl">24-09-2018 23:00:00</text>
<line x1="1565.5" y1="856" x2="1565.5" y2="865" stroke="#000" stroke-width="1.3"/>
<text x="1565.5" y="900.3" class="xl">25-09-2018 00:00:00</text>
<line x1="1668.5" y1="856" x2="1668.5" y2="865" stroke="#000" stroke-width="1.3"/>
<text x="1668.5" y="878.0" class="xl">25-09-2018 01:00:00</text>
<line x1="1772.5" y1="856" x2="1772.5" y2="865" stroke="#000" stroke-width="1.3"/>
<text x="1772.5" y="900.3" class="xl">25-09-2018 02:00:00</text>
<text x="1388" y="931" class="xl">Date/Time (d-m-y)</text>
<text x="0" y="0" class="xl" style="font-size:13px" transform="translate(886 555) rotate(-90)">Temperature °C</text>
<path d="M962.3 355.2 L970.9 355.2 L979.5 415.5 L988.1 415.5 L996.7 455.6 L1005.3 495.7 L1014.0 535.9 L1022.6 556.0 L1031.2 576.0 L1039.8 576.0 L1048.4 596.1 L1057.0 596.1 L1065.6 616.2 L1074.2 616.2 L1082.8 636.2 L1091.4 636.2 L1100.1 636.2 L1108.7 656.3 L1117.3 656.3 L1125.9 676.4 L1134.5 676.4 L1143.1 696.4 L1151.7 696.4 L1160.3 696.4 L1168.9 696.4 L1177.5 696.4 L1186.2 696.4 L1194.8 716.5 L1203.4 716.5 L1212.0 736.6 L1220.6 736.6 L1229.2 716.5 L1237.8 736.6 L1246.4 736.6 L1255.0 736.6 L1263.6 736.6 L1272.3 736.6 L1280.9 736.6 L1289.5 736.6 L1298.1 736.6 L1306.7 736.6 L1315.3 736.6 L1323.9 736.6 L1332.5 736.6 L1341.1 736.6 L1349.8 756.6 L1358.4 736.6 L1367.0 736.6 L1375.6 736.6 L1384.2 756.6 L1392.8 756.6 L1401.4 756.6 L1410.0 756.6 L1418.6 756.6 L1427.2 756.6 L1435.8 756.6 L1444.5 756.6 L1453.1 756.6 L1461.7 776.7 L1470.3 756.6 L1478.9 776.7 L1487.5 776.7 L1496.1 756.6 L1504.7 756.6 L1513.3 756.6 L1521.9 756.6 L1530.6 756.6 L1539.2 756.6 L1547.8 776.7 L1556.4 756.6 L1565.0 776.7 L1573.6 776.7 L1582.2 776.7 L1590.8 776.7 L1599.4 776.7 L1608.0 776.7 L1616.7 776.7 L1625.3 776.7 L1633.9 776.7 L1642.5 776.7 L1651.1 796.8 L1659.7 796.8 L1668.3 776.7 L1676.9 796.8 L1685.5 776.7 L1694.1 796.8 L1702.8 796.8 L1711.4 796.8 L1720.0 796.8 L1728.6 796.8 L1737.2 796.8 L1745.8 796.8 L1754.4 816.9 L1763.0 796.8 L1771.6 796.8 L1780.2 796.8 L1788.9 796.8 L1797.5 796.8 L1806.1 816.9 L1814.7 776.7" fill="none" stroke="#f0a040" stroke-width="1.1"/>
<path d="M962.3 355.2 L970.9 415.5 L979.5 455.6 L988.1 495.7 L996.7 515.8 L1005.3 535.9 L1014.0 576.0 L1022.6 616.2 L1031.2 616.2 L1039.8 636.2 L1048.4 636.2 L1057.0 656.3 L1065.6 656.3 L1074.2 676.4 L1082.8 676.4 L1091.4 696.4 L1100.1 696.4 L1108.7 676.4 L1117.3 696.4 L1125.9 696.4 L1134.5 716.5 L1143.1 716.5 L1151.7 736.6 L1160.3 736.6 L1168.9 736.6 L1177.5 736.6 L1186.2 736.6 L1194.8 756.6 L1203.4 736.6 L1212.0 756.6 L1220.6 776.7 L1229.2 756.6 L1237.8 756.6 L1246.4 776.7 L1255.0 776.7 L1263.6 776.7 L1272.3 776.7 L1280.9 776.7 L1289.5 776.7 L1298.1 756.6 L1306.7 776.7 L1315.3 776.7 L1323.9 776.7 L1332.5 776.7 L1341.1 776.7 L1349.8 796.8 L1358.4 796.8 L1367.0 776.7 L1375.6 796.8 L1384.2 796.8 L1392.8 796.8 L1401.4 796.8 L1410.0 816.9 L1418.6 816.9 L1427.2 796.8 L1435.8 796.8 L1444.5 796.8 L1453.1 796.8 L1461.7 796.8 L1470.3 796.8 L1478.9 796.8 L1487.5 796.8 L1496.1 796.8 L1504.7 816.9 L1513.3 796.8 L1521.9 796.8 L1530.6 796.8 L1539.2 796.8 L1547.8 796.8 L1556.4 796.8 L1565.0 796.8 L1573.6 796.8 L1582.2 796.8 L1590.8 816.9 L1599.4 816.9 L1608.0 816.9 L1616.7 816.9 L1625.3 816.9 L1633.9 816.9 L1642.5 816.9 L1651.1 816.9 L1659.7 816.9 L1668.3 816.9 L1676.9 836.9 L1685.5 836.9 L1694.1 836.9 L1702.8 836.9 L1711.4 836.9 L1720.0 836.9 L1728.6 836.9 L1737.2 816.9 L1745.8 816.9 L1754.4 836.9 L1763.0 816.9 L1771.6 836.9 L1780.2 836.9 L1788.9 836.9 L1797.5 836.9 L1806.1 836.9 L1814.7 836.9" fill="none" stroke="#1a1a1a" stroke-width="1.2"/>
</svg>
<div class="a" style="left:832px;top:786px;width:118px;height:21.5px;background:linear-gradient(#f4f4f4,#dedede 55%,#d4d4d4);border:1px solid #a9a9a9;border-left:none"></div>
<div class="a" style="left:841px;top:788px;width:16px;height:15.5px;border:2px solid #1b1b1b;background:linear-gradient(#e6e6e6,#f9f9f9)"></div>
<svg class="a" style="left:843px;top:790px" width="12" height="12" viewBox="0 0 12 12"><path d="M2.5 6.5 L5 10 L9.5 1.5" fill="none" stroke="#2b2f7d" stroke-width="2"/></svg>
<div class="t" style="left:888px;top:791px;font-size:13px;color:#111">Sensor 1</div>
<div class="a" style="left:950px;top:785px;width:126px;height:25px;background:#f9f9f9;border:1px solid #a9a9a9"></div>
<div class="a" style="left:961px;top:789px;width:17px;height:16px;border:2px solid #f0a04a;background:linear-gradient(#e6e6e6,#f9f9f9)"></div>
<svg class="a" style="left:963.5px;top:791px" width="12" height="12" viewBox="0 0 12 12"><path d="M2.5 6.5 L5 10 L9.5 1.5" fill="none" stroke="#2b2f7d" stroke-width="2"/></svg>
<div class="t" style="left:1009px;top:792px;font-size:13px;color:#f0a04a">Sensor 2</div>
</div>
<div id="mdil"></div>
<!-- MDI scrollbar -->
<div class="a" style="left:1896px;top:180px;width:22px;height:828px;background:#f0f0f0;border-left:1px solid #e4e4e4;border-right:1px solid #fafafa"></div>
<svg class="a" style="left:1901px;top:186px" width="12" height="9" viewBox="0 0 12 9"><path d="M1 7.5 L6 2 L11 7.5 Z" fill="#3f3f3f"/></svg>
<div class="a" style="left:1898px;top:202px;width:18px;height:740px;border:1px solid #9e9e9e;border-radius:2px;background:linear-gradient(90deg,#f6f6f6,#e6e6e6 40%,#d6d6d6 75%,#c6c6c6)"></div>
<div class="a" style="left:1902px;top:567px;width:9px;height:8px;border-top:1.5px solid #3a3a3a;border-bottom:1.5px solid #3a3a3a"></div>
<div class="a" style="left:1902px;top:570.5px;width:9px;height:1.5px;background:#3a3a3a"></div>
<svg class="a" style="left:1901px;top:993px" width="12" height="9" viewBox="0 0 12 9"><path d="M1 1.5 L6 7 L11 1.5 Z" fill="#3f3f3f"/></svg>
<div class="a" style="left:1918px;top:68px;width:2px;height:964px;background:#c3d4ea"></div>
<div id="status"><div class="t" style="left:3px;top:6px;font-size:14px;color:#34465e">Ready</div></div>

</div>
</body></html>
